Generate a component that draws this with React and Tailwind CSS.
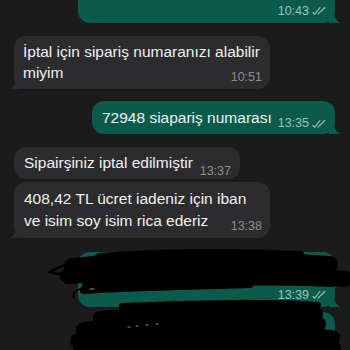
import React from "react";

const font = { fontFamily: '"Liberation Sans", Arial, sans-serif' };

function Checks() {
  return (
    <svg width="15" height="10" viewBox="0 0 15 10" className="ml-[3px]">
      <path d="M1 6.5 L2.6 8.2 L8 1.5" fill="none" stroke="#9cc4ba" strokeWidth="1.1" strokeLinecap="round" />
      <path d="M6 8.2 L12.8 1.5" fill="none" stroke="#9cc4ba" strokeWidth="1.1" strokeLinecap="round" />
    </svg>
  );
}

function OutTime({ t }) {
  return (
    <span className="flex items-center text-[12.5px] text-[#9cc4ba] leading-none">
      {t}
      <Checks />
    </span>
  );
}

function InTime({ t }) {
  return <span className="text-[12.5px] text-[#8e8e90] leading-none">{t}</span>;
}

function TailLeft() {
  return (
    <svg width="12" height="12" viewBox="0 0 12 12" className="absolute -left-[5px] bottom-0">
      <path d="M12 0 L12 12 L0 12 C5 10 7 6 7 0 Z" fill="#2c2c2e" />
    </svg>
  );
}

function TailRight() {
  return (
    <svg width="12" height="12" viewBox="0 0 12 12" className="absolute -right-[6px] bottom-0">
      <path d="M0 0 L0 12 L12 12 C7 10 5 6 5 0 Z" fill="#0b5b4c" />
    </svg>
  );
}

// marker scribble over the last two messages
function Scribble() {
  return (
    <svg width="350" height="350" viewBox="0 0 350 350" className="absolute left-0 top-0 pointer-events-none">
      <g fill="none" stroke="#000" strokeLinecap="round">
        <path d="M123 253 C 95 255, 62 264, 50 272 C 60 276, 82 274, 104 270" strokeWidth="2.5" />
        <path d="M100 258 C 160 253, 240 253, 300 256" strokeWidth="10" />
        <path d="M72 266 C 150 259, 260 259, 330 264" strokeWidth="16" />
        <path d="M68 276 C 150 270, 260 270, 345 279" strokeWidth="16" />
        <path d="M88 284 C 160 280, 260 278, 332 281" strokeWidth="12" />
        <path d="M84 290 C 130 287, 190 286, 250 284" strokeWidth="8" />
        <path d="M74 298 C 72 294, 74 291, 80 289" strokeWidth="1.5" />
        <path d="M122 306 C 200 302, 280 302, 318 305" strokeWidth="6" />
        <path d="M100 318 C 180 310, 260 310, 316 314" strokeWidth="14" />
        <path d="M84 330 C 160 322, 250 320, 318 324" strokeWidth="16" />
        <path d="M78 341 C 160 334, 260 332, 332 338" strokeWidth="16" />
        <path d="M80 351 C 160 346, 260 346, 334 348" strokeWidth="14" />
      </g>
      <g stroke="#cfe" strokeWidth="1" strokeLinecap="round" opacity="0.6">
        <path d="M90 289 L 94 289" />
        <path d="M128 327 L 130 327 M136 326 L 138 326 M146 325 L 148 325 M156 324 L 158 324" />
      </g>
    </svg>
  );
}

export default function App() {
  return (
    <div className="relative w-[350px] h-[350px] overflow-hidden bg-[#1b1b1b]" style={font}>
      <div className="flex flex-col">
        {/* top outgoing (cut off) */}
        <div className="relative ml-[78px] mr-[15px] h-[23px] rounded-b-[12px] bg-[#0b5b4c] flex items-end justify-end pr-[8px] pb-[6px]">
          <OutTime t="10:43" />
          <TailRight />
        </div>

        {/* incoming 1 */}
        <div className="relative mt-[13px] ml-[14px] w-[256px] rounded-[12px] bg-[#2c2c2e] pl-[9px] pr-[8px] pt-[5px] pb-[6px] text-[15.5px] leading-[21px] text-[#f0f0f0]">
          <div className="whitespace-nowrap">İptal için sipariş numaranızı alabilir</div>
          <div className="flex items-end justify-between">
            <span>miyim</span>
            <InTime t="10:51" />
          </div>
          <TailLeft />
        </div>

        {/* outgoing 2 */}
        <div className="relative mt-[12px] ml-[92px] mr-[15px] h-[33px] rounded-[12px] bg-[#0b5b4c] pl-[10px] pr-[8px] flex items-center justify-between text-[15.5px] text-[#f0f0f0]">
          <span className="whitespace-nowrap">72948 siapariş numarası</span>
          <span className="mt-[12px]">
            <OutTime t="13:35" />
          </span>
          <TailRight />
        </div>

        {/* incoming 3 */}
        <div className="relative mt-[13px] ml-[14px] w-[226px] h-[32px] rounded-[12px] bg-[#2c2c2e] pl-[10px] pr-[9px] flex items-center justify-between text-[15.5px] text-[#f0f0f0]">
          <span className="whitespace-nowrap">Sipairşiniz iptal edilmiştir</span>
          <span className="mt-[14px]">
            <InTime t="13:37" />
          </span>
        </div>

        {/* incoming 4 */}
        <div className="relative mt-[3px] ml-[14px] w-[256px] rounded-[12px] bg-[#2c2c2e] pl-[10px] pr-[8px] pt-[6px] pb-[6px] text-[15.5px] leading-[22px] text-[#f0f0f0]">
          <div className="whitespace-nowrap">408,42 TL ücret iadeniz için iban</div>
          <div className="flex items-end justify-between">
            <span className="whitespace-nowrap">ve isim soy isim rica ederiz</span>
            <InTime t="13:38" />
          </div>
          <TailLeft />
        </div>

        {/* outgoing 5 (scribbled) */}
        <div className="relative mt-[14px] ml-[78px] mr-[15px] h-[55px] rounded-[12px] bg-[#0b5b4c] flex items-end justify-end pr-[8px] pb-[6px]">
          <OutTime t="13:39" />
          <TailRight />
        </div>

        {/* outgoing 6 (scribbled) */}
        <div className="relative mt-[5px] ml-[116px] mr-[15px] h-[60px] rounded-t-[12px] bg-[#0b5b4c]" />
      </div>
      <Scribble />
    </div>
  );
}
